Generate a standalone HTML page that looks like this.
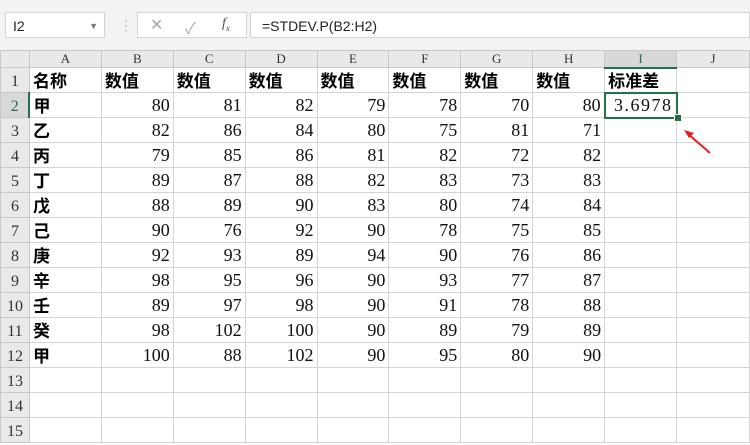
<!DOCTYPE html>
<html><head><meta charset="utf-8"><style>
body{margin:0;width:750px;height:445px;overflow:hidden;background:#fff;font-family:"Liberation Sans","Noto Sans CJK SC",sans-serif;position:relative}
.top{position:absolute;left:0;top:0;width:750px;height:50px;background:#f3f3f3}
.nb{position:absolute;left:5px;top:12px;width:100px;height:26px;background:#fff;border:1px solid #d4d4d4;font-size:14px;line-height:26px;padding-left:7px;box-sizing:border-box;color:#222}
.fb{position:absolute;left:137px;top:12px;width:110px;height:26px;background:#fff;border:1px solid #d4d4d4;box-sizing:border-box;color:#aaa;font-size:16px}
.fx{position:absolute;left:250px;top:12px;width:500px;height:26px;background:#fff;border:1px solid #d4d4d4;box-sizing:border-box;font-size:14px;line-height:26px;padding-left:11px;color:#222}
table{position:absolute;left:0;top:50px;border-collapse:collapse;table-layout:fixed}
tr{height:25px}
td{border:1px solid #d4d4d4;height:25px;line-height:16px;padding:0 3px;font-size:17px;white-space:nowrap;overflow:hidden;box-sizing:border-box}
tr.h{height:17px}
tr.h td{height:17px;line-height:14px;background:#e9e9e9;text-align:center;font-family:"Liberation Serif",serif;font-size:13px;color:#333;border-color:#c8c8c8}
td.r{background:#e9e9e9;text-align:center;font-family:"Liberation Serif",serif;font-size:16px;color:#333;padding:4px 0 0 0;border-color:#c8c8c8}
td.n{text-align:right;font-family:"Liberation Serif",serif;font-size:18px;color:#111}
td.c{font-family:"Noto Sans CJK SC",sans-serif;font-weight:bold;color:#000;font-size:17px}
</style></head><body>
<div class="top"></div>
<div class="nb">I2<span style="position:absolute;right:6px;top:0;font-size:9px;color:#777">▼</span></div>
<div style="position:absolute;left:119px;top:17px;color:#aaa;font-size:14px">⋮</div>
<div class="fb"><span style="position:absolute;left:12px;top:2px">✕</span><span style="position:absolute;left:47px;top:2px">✓</span><span style="position:absolute;left:84px;top:3px;font-family:'Liberation Serif',serif;font-style:italic;color:#555;font-size:14px">f<sub style="font-size:9px">x</sub></span></div>
<div class="fx">=STDEV.P(B2:H2)</div>
<table>
<colgroup><col style="width:29px"><col style="width:72px"><col style="width:72px"><col style="width:72px"><col style="width:72px"><col style="width:72px"><col style="width:72px"><col style="width:72px"><col style="width:72px"><col style="width:72px"><col style="width:73px"></colgroup>
<tr class="h"><td></td><td>A</td><td>B</td><td>C</td><td>D</td><td>E</td><td>F</td><td>G</td><td>H</td><td style="color:#217346;border-bottom:2px solid #217346;background:#d8d8d8">I</td><td>J</td></tr>
<tr><td class="r">1</td><td class="c">名称</td><td class="c">数值</td><td class="c">数值</td><td class="c">数值</td><td class="c">数值</td><td class="c">数值</td><td class="c">数值</td><td class="c">数值</td><td class="c">标准差</td><td></td></tr>
<tr><td class="r" style="color:#217346;background:#d8d8d8;border-right:2px solid #217346">2</td><td class="c">甲</td><td class="n">80</td><td class="n">81</td><td class="n">82</td><td class="n">79</td><td class="n">78</td><td class="n">70</td><td class="n">80</td><td class="n" style="border:2px solid #217346;text-align:right;letter-spacing:1.5px">3.6978</td><td></td></tr>
<tr><td class="r">3</td><td class="c">乙</td><td class="n">82</td><td class="n">86</td><td class="n">84</td><td class="n">80</td><td class="n">75</td><td class="n">81</td><td class="n">71</td><td></td><td></td></tr>
<tr><td class="r">4</td><td class="c">丙</td><td class="n">79</td><td class="n">85</td><td class="n">86</td><td class="n">81</td><td class="n">82</td><td class="n">72</td><td class="n">82</td><td></td><td></td></tr>
<tr><td class="r">5</td><td class="c">丁</td><td class="n">89</td><td class="n">87</td><td class="n">88</td><td class="n">82</td><td class="n">83</td><td class="n">73</td><td class="n">83</td><td></td><td></td></tr>
<tr><td class="r">6</td><td class="c">戊</td><td class="n">88</td><td class="n">89</td><td class="n">90</td><td class="n">83</td><td class="n">80</td><td class="n">74</td><td class="n">84</td><td></td><td></td></tr>
<tr><td class="r">7</td><td class="c">己</td><td class="n">90</td><td class="n">76</td><td class="n">92</td><td class="n">90</td><td class="n">78</td><td class="n">75</td><td class="n">85</td><td></td><td></td></tr>
<tr><td class="r">8</td><td class="c">庚</td><td class="n">92</td><td class="n">93</td><td class="n">89</td><td class="n">94</td><td class="n">90</td><td class="n">76</td><td class="n">86</td><td></td><td></td></tr>
<tr><td class="r">9</td><td class="c">辛</td><td class="n">98</td><td class="n">95</td><td class="n">96</td><td class="n">90</td><td class="n">93</td><td class="n">77</td><td class="n">87</td><td></td><td></td></tr>
<tr><td class="r">10</td><td class="c">壬</td><td class="n">89</td><td class="n">97</td><td class="n">98</td><td class="n">90</td><td class="n">91</td><td class="n">78</td><td class="n">88</td><td></td><td></td></tr>
<tr><td class="r">11</td><td class="c">癸</td><td class="n">98</td><td class="n">102</td><td class="n">100</td><td class="n">90</td><td class="n">89</td><td class="n">79</td><td class="n">89</td><td></td><td></td></tr>
<tr><td class="r">12</td><td class="c">甲</td><td class="n">100</td><td class="n">88</td><td class="n">102</td><td class="n">90</td><td class="n">95</td><td class="n">80</td><td class="n">90</td><td></td><td></td></tr>
<tr><td class="r">13</td><td></td><td></td><td></td><td></td><td></td><td></td><td></td><td></td><td></td><td></td></tr>
<tr><td class="r">14</td><td></td><td></td><td></td><td></td><td></td><td></td><td></td><td></td><td></td><td></td></tr>
<tr><td class="r">15</td><td></td><td></td><td></td><td></td><td></td><td></td><td></td><td></td><td></td><td></td></tr>
</table>
<div style="position:absolute;left:674px;top:114px;width:6px;height:6px;background:#217346;border:1px solid #fff"></div>
<svg style="position:absolute;left:0;top:0" width="750" height="445"><line x1="710" y1="153" x2="688" y2="134" stroke="#e02020" stroke-width="2"/><polygon points="684,130 694,133 689,138" fill="#e02020"/></svg>
</body></html>
